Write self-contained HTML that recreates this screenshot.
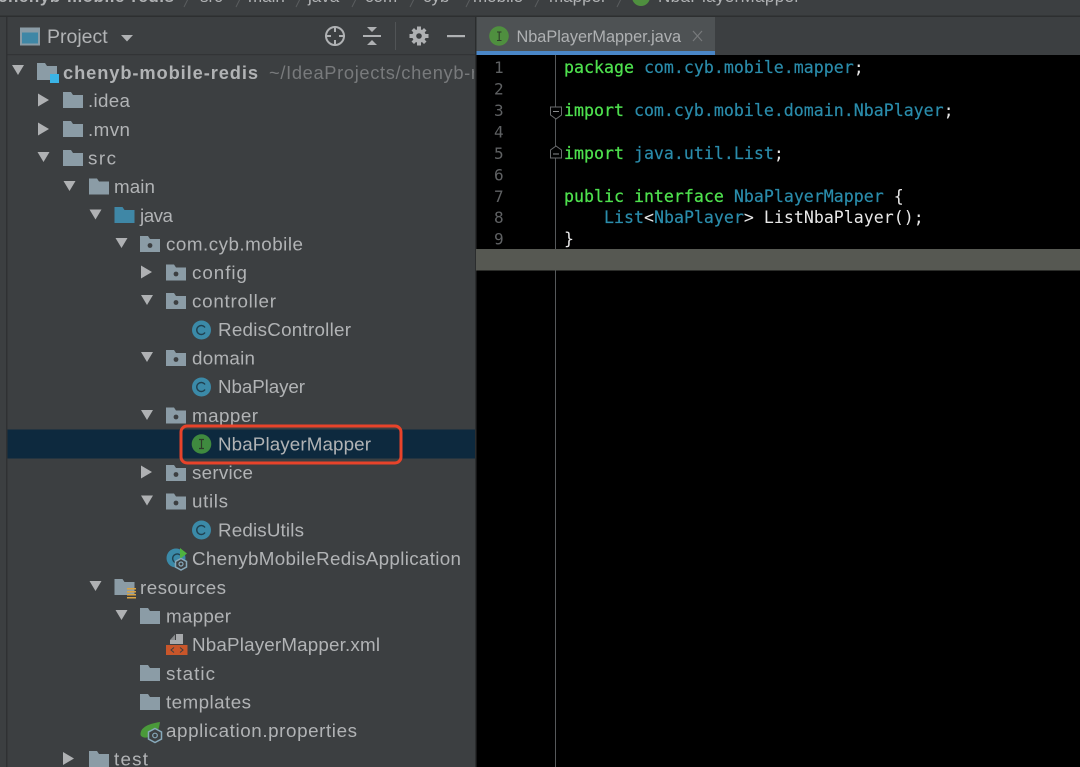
<!DOCTYPE html>
<html>
<head>
<meta charset="utf-8">
<style>
html,body{margin:0;padding:0;background:#3c3f41;}
svg{display:block;position:absolute;left:0;top:0;}
.t{font-family:"Liberation Sans",sans-serif;font-size:18.8px;fill:#b1b3b5;}
.b{font-family:"Liberation Sans",sans-serif;font-size:17px;fill:#b1b3b5;}
.c{font-family:"DejaVu Sans Mono","Liberation Mono",monospace;font-size:16.6px;}
.k{fill:#4ee04e;stroke:#4ee04e;stroke-width:.25;}.p{fill:#2a8cab;stroke:#2a8cab;stroke-width:.2;}.w{fill:#e8e8e8;}.n{font-family:"DejaVu Sans Mono","Liberation Mono",monospace;font-size:16px;fill:#5f6163;}
</style>
</head>
<body>
<svg width="1080" height="767" viewBox="0 0 1080 767" xmlns="http://www.w3.org/2000/svg">
<defs>
<path id="fo" d="M0 0H8L10 3H20V16H0Z" fill="#8b9ca6"/>
<g id="pk"><path d="M0 0H8L10 3H20V16H0Z" fill="#8b9ca6"/><circle cx="10" cy="9.500" r="2.400" fill="#3c3f41"/></g>
<path id="dn" d="M0 0H12L6 10Z" fill="#afb1b3"/>
<path id="rt" d="M0 0L11 6.500L0 13Z" fill="#afb1b3"/>
<g id="cl"><circle cx="10" cy="10" r="9.500" fill="#3b8aa8"/><path d="M13.500 7.500A4.500 4.500 0 1 0 13.500 12.500" fill="none" stroke="#20404f" stroke-width="1.400"/></g>
<clipPath id="pc"><rect x="7" y="55" width="467" height="712"/></clipPath>
</defs>

<rect width="1080" height="767" fill="#3c3f41"/>

<!-- breadcrumb -->
<rect x="0" y="15.500" width="1080" height="1.500" fill="#2d2f30"/>
<text x="-2" y="2" class="b" style="font-weight:700" textLength="176">chenyb-mobile-redis</text>
<text x="200" y="2" class="b">src</text>
<text x="248" y="2" class="b">main</text>
<text x="308" y="2" class="b">java</text>
<text x="365" y="2" class="b">com</text>
<text x="423" y="2" class="b">cyb</text>
<text x="473" y="2" class="b">mobile</text>
<text x="549" y="2" class="b">mapper</text>
<text x="658" y="2" class="b" textLength="142">NbaPlayerMapper</text>
<g stroke="#5a5d5f" stroke-width="1" fill="none">
<path d="M184 7L189 -3M236 7L241 -3M296 7L301 -3M352 7L357 -3M410 7L415 -3M466 7L471 -3M535 7L540 -3M617 7L622 -3"/>
</g>
<circle cx="641" cy="-3" r="9" fill="#4f8f3f"/>

<!-- left strip and tool window -->
<rect x="0" y="17" width="6" height="750" fill="#3c3f41"/>
<rect x="6" y="17" width="1.500" height="750" fill="#2f3133"/>
<rect x="7.500" y="54" width="468" height="1.200" fill="#323436"/>

<!-- project header -->
<rect x="21" y="28.500" width="18" height="16" fill="#3f87a6" stroke="#8b9ca6" stroke-width="2"/>
<rect x="22" y="29.500" width="16" height="3" fill="#8b9ca6"/>
<text x="47" y="43" class="t" style="font-size:19.500px">Project</text>
<path d="M121 35H133L127 41.500Z" fill="#afb1b3"/>
<g fill="none" stroke="#afb1b3" stroke-width="2">
<circle cx="335" cy="36" r="9"/>
<path d="M335 26V32M335 40V46M325 36H331M339 36H345"/>
<path d="M363 36H381"/>
</g>
<path d="M367 27H377L372 32Z M367 45H377L372 40Z" fill="#afb1b3"/>
<rect x="395" y="22" width="1" height="28" fill="#515456"/>
<g fill="#afb1b3">
<circle cx="419" cy="36" r="6.700"/>
<path d="M417 26.500H421V30H417Z M417 42H421V45.500H417Z M409.500 34H413V38H409.500Z M425 34H428.500V38H425Z"/>
<path d="M411.500 30.500L414 28L416.500 30.500L414 33Z M421.500 30.500L424 28L426.500 30.500L424 33Z M411.500 41.500L414 39L416.500 41.500L414 44Z M421.500 41.500L424 39L426.500 41.500L424 44Z"/>
</g>
<circle cx="419" cy="36" r="2.800" fill="#3c3f41"/>
<rect x="447" y="35" width="18" height="2.200" fill="#afb1b3"/>

<!-- selection row -->
<rect x="7.500" y="429.500" width="468" height="29" fill="#0d293e"/>

<!-- tree root -->
<use href="#dn" x="12" y="65"/>
<path d="M37 63H45L47 66H57V80H37Z" fill="#8b9ca6"/>
<rect x="50" y="74" width="9" height="9" fill="#3bb4e6"/>
<text x="63" y="79" class="t" style="font-weight:700;font-size:18.300px" textLength="195">chenyb-mobile-redis</text>
<g clip-path="url(#pc)"><text x="269" y="79" class="t" style="fill:#787a7c;font-size:18.300px" textLength="208">~/IdeaProjects/chenyb-r</text></g>

<!-- arrows -->
<use href="#rt" x="38" y="93.500"/>
<use href="#rt" x="38" y="122.500"/>
<use href="#dn" x="37.500" y="152"/>
<use href="#dn" x="63.500" y="181"/>
<use href="#dn" x="89.500" y="209.500"/>
<use href="#dn" x="115.500" y="238"/>
<use href="#rt" x="141" y="265.500"/>
<use href="#dn" x="141" y="295"/>
<use href="#dn" x="141" y="352"/>
<use href="#dn" x="141" y="410"/>
<use href="#rt" x="141" y="465.500"/>
<use href="#dn" x="141" y="495.500"/>
<use href="#dn" x="89.500" y="581"/>
<use href="#dn" x="115.500" y="610"/>
<use href="#rt" x="63" y="752"/>

<!-- folders -->
<use href="#fo" x="63" y="92"/>
<use href="#fo" x="63" y="121"/>
<use href="#fo" x="63" y="150"/>
<use href="#fo" x="89" y="178.500"/>
<path d="M114.500 207H122.500L124.500 210H134.500V223H114.500Z" fill="#3f87a6"/>
<use href="#pk" x="140" y="236"/>
<use href="#pk" x="166" y="264.500"/>
<use href="#pk" x="166" y="293"/>
<use href="#pk" x="166" y="350"/>
<use href="#pk" x="166" y="407.500"/>
<use href="#pk" x="166" y="465"/>
<use href="#pk" x="166" y="493.500"/>
<use href="#fo" x="114.500" y="579"/>
<g fill="#d9a343"><rect x="127" y="588" width="9" height="1.500"/><rect x="127" y="591" width="9" height="1.500"/><rect x="127" y="594" width="9" height="1.500"/><rect x="127" y="597" width="9" height="1.500"/></g>
<use href="#fo" x="140" y="608"/>
<use href="#fo" x="140" y="665"/>
<use href="#fo" x="140" y="694"/>
<use href="#fo" x="89" y="751"/>

<!-- class icons -->
<use href="#cl" x="191.500" y="320"/>
<use href="#cl" x="191.500" y="377"/>
<use href="#cl" x="191.500" y="520"/>
<circle cx="201.500" cy="444" r="9.800" fill="#3f8a3f"/>
<path d="M199 439.500H204M199 448.500H204M201.500 439.500V448.500" stroke="#2e3a2a" stroke-width="1.200" fill="none"/>

<!-- Chenyb app icon -->
<circle cx="176" cy="558" r="9.500" fill="#3b8aa8"/>
<path d="M180 555A4.500 4.500 0 1 0 177 563" fill="none" stroke="#20404f" stroke-width="1.400"/>
<path d="M180 548L187 553.500L180 559Z" fill="#4fb33f"/>
<path d="M181 558.500L186.500 561.500V567L181 570L175.500 567V561.500Z" fill="#3c3f41" stroke="#87a9ba" stroke-width="1.500"/>
<circle cx="181" cy="564" r="2" fill="none" stroke="#87a9ba" stroke-width="1.200"/>

<!-- xml icon -->
<path d="M176 634H183V644H170V640H176Z" fill="#a7a9ab"/>
<path d="M170 640L175 634.500V640Z" fill="#8a8c8e"/>
<rect x="166" y="645" width="21.500" height="10" fill="#c9562a"/>
<path d="M174 647.500L171 650L174 652.500M180 647.500L183 650L180 652.500" stroke="#3c3f41" stroke-width="1" fill="none"/>

<!-- spring props icon -->
<path d="M140.500 735C140 728 147 724 160 722C159 728 158 734 150 737C146 738 142 738 140.500 735Z" fill="#4a9a3a"/>
<path d="M155 728.500L161.500 732V739L155 742.500L148.500 739V732Z" fill="#3c3f41" stroke="#87a9ba" stroke-width="1.500"/>
<circle cx="155" cy="735.500" r="2.300" fill="none" stroke="#87a9ba" stroke-width="1.200"/>

<!-- tree labels -->
<text x="88" y="107" class="t" textLength="42">.idea</text>
<text x="88" y="136" class="t" textLength="42">.mvn</text>
<text x="88" y="164.500" class="t" textLength="28">src</text>
<text x="114" y="193" class="t" textLength="41">main</text>
<text x="140" y="222" class="t" textLength="33">java</text>
<text x="166" y="250.500" class="t" textLength="137">com.cyb.mobile</text>
<text x="192" y="279" class="t" textLength="55">config</text>
<text x="192" y="307.500" class="t" textLength="84">controller</text>
<text x="218" y="336" class="t" textLength="133">RedisController</text>
<text x="192" y="364.500" class="t" textLength="63">domain</text>
<text x="218" y="393" class="t" textLength="87">NbaPlayer</text>
<text x="192" y="422" class="t" textLength="66">mapper</text>
<text x="218" y="450.500" class="t" textLength="153">NbaPlayerMapper</text>
<text x="192" y="479" class="t" textLength="61">service</text>
<text x="192" y="507.500" class="t" textLength="36">utils</text>
<text x="218" y="536.500" class="t" textLength="86">RedisUtils</text>
<text x="192" y="565" class="t" textLength="269">ChenybMobileRedisApplication</text>
<text x="140" y="594" class="t" textLength="86">resources</text>
<text x="166" y="622.500" class="t" textLength="65">mapper</text>
<text x="192" y="651" class="t" textLength="188">NbaPlayerMapper.xml</text>
<text x="166" y="680" class="t" textLength="49">static</text>
<text x="166" y="708.500" class="t" textLength="85">templates</text>
<text x="166" y="737" class="t" textLength="191">application.properties</text>
<text x="114" y="765.500" class="t" textLength="34">test</text>

<!-- red highlight -->
<rect x="181" y="426" width="220" height="37" rx="6" fill="none" stroke="#e8432a" stroke-width="3"/>

<!-- editor -->
<rect x="475" y="17" width="605" height="38" fill="#3c3f41"/>
<rect x="476" y="17" width="239" height="34" fill="#4e5254"/>
<rect x="476" y="51" width="239" height="4" fill="#4a86c7"/>
<circle cx="499" cy="36" r="9.800" fill="#4f8f3f"/>
<path d="M497 32H501.500M497 40.500H501.500M499.200 32V40.500" stroke="#2e3a2a" stroke-width="1.100" fill="none"/>
<text x="516.500" y="42" class="t" style="font-size:16.300px;fill:#afb1b3" textLength="164.500">NbaPlayerMapper.java</text>
<path d="M693 31L702 41M702 31L693 41" stroke="#787a7c" stroke-width="1.200"/>
<rect x="476" y="55" width="604" height="712" fill="#000"/>
<rect x="475" y="17" width="1.500" height="750" fill="#2b2d2e"/>
<rect x="476" y="249" width="604" height="21.500" fill="#565852"/>
<rect x="555" y="55" width="1" height="194" fill="#55585a"/>
<rect x="555" y="270.500" width="1" height="497" fill="#55585a"/>

<!-- fold markers -->
<g fill="#000" stroke="#6a6c6e" stroke-width="1">
<path d="M550.500 107H561.500V115L556 119L550.500 115Z"/>
<path d="M550.500 158H561.500V150L556 146L550.500 150Z"/>
</g>
<path d="M553 111.500H559M553 154H559" stroke="#8a8c8e" stroke-width="1"/>

<!-- line numbers -->
<text x="494" y="73" class="n">1</text>
<text x="494" y="94.500" class="n">2</text>
<text x="494" y="116" class="n">3</text>
<text x="494" y="137.500" class="n">4</text>
<text x="494" y="159" class="n">5</text>
<text x="494" y="180.500" class="n">6</text>
<text x="494" y="202" class="n">7</text>
<text x="494" y="223" class="n">8</text>
<text x="494" y="244.500" class="n">9</text>

<!-- code -->
<text x="564" y="73" class="c" xml:space="preserve"><tspan class="k">package</tspan><tspan class="w"> </tspan><tspan class="p">com.cyb.mobile.mapper</tspan><tspan class="w">;</tspan></text>
<text x="564" y="116" class="c" xml:space="preserve"><tspan class="k">import</tspan><tspan class="w"> </tspan><tspan class="p">com.cyb.mobile.domain.NbaPlayer</tspan><tspan class="w">;</tspan></text>
<text x="564" y="159" class="c" xml:space="preserve"><tspan class="k">import</tspan><tspan class="w"> </tspan><tspan class="p">java.util.List</tspan><tspan class="w">;</tspan></text>
<text x="564" y="202" class="c" xml:space="preserve"><tspan class="k">public</tspan><tspan class="w"> </tspan><tspan class="k">interface</tspan><tspan class="w"> </tspan><tspan class="p">NbaPlayerMapper</tspan><tspan class="w"> {</tspan></text>
<text x="604" y="223" class="c" xml:space="preserve"><tspan class="p">List</tspan><tspan class="w">&lt;</tspan><tspan class="p">NbaPlayer</tspan><tspan class="w">&gt; ListNbaPlayer();</tspan></text>
<text x="564" y="244.500" class="c w">}</text>
</svg>
</body>
</html>
